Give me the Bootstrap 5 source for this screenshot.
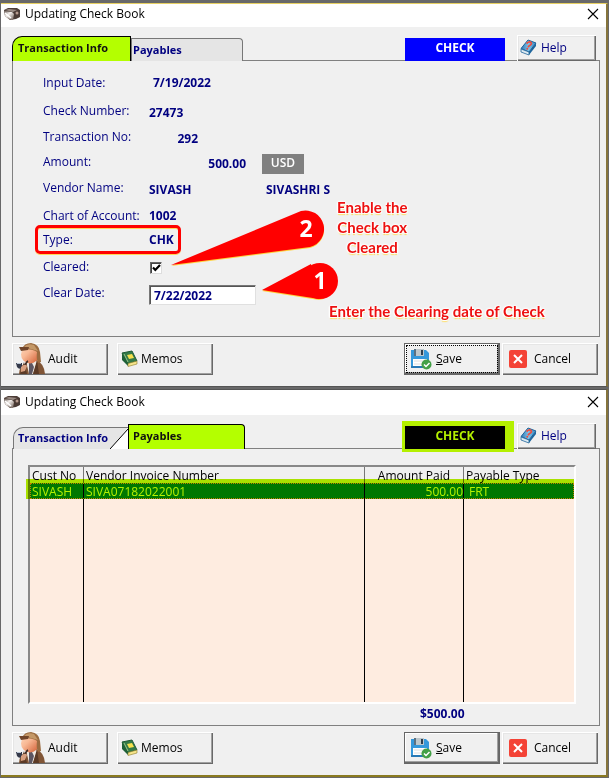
<!DOCTYPE html>
<html lang="en">
<head>
<meta charset="utf-8">
<meta name="viewport" content="width=device-width, initial-scale=1">
<title>Updating Check Book</title>
<link href="https://cdn.jsdelivr.net/npm/bootstrap@5.3.0/dist/css/bootstrap.min.css" rel="stylesheet">
<style>
body{background:#686869;font:12px/16px "Open Sans","Noto Sans",sans-serif;color:#000;padding:3px 1px 0}
h1{font-size:12px;line-height:16px;margin:0;font-weight:400}
svg{display:block;flex:none}
.win{background:#f0f0f0;border-right:2px solid #85743c;border-bottom:1px solid #555}
.win-first{border-top:1px solid #e6cf62;margin-bottom:2px}
.win-last{border-top:1px solid #555;border-bottom:2px solid #8a7a20}
.titlebar{background:#fff;height:23px;padding:0 7px 3px 3px;gap:5px}
.win-last .titlebar{height:25px;padding-bottom:1px}
.close-x{border:0;background:none;padding:0}
.work{padding:8px 6px 11px 11px}
.tabstrip{height:26px;margin-bottom:-1px;position:relative}
.tab-btn{font-size:11px;font-weight:700;color:#000080;text-align:left;border:1px solid #777;border-bottom:0;background:#e5e5e5;padding:0 4px 1px;white-space:nowrap}
.tab-btn.on{background:#b4ff00;color:#111;border-color:#000;padding-bottom:3px}
.tab-a{width:119px;height:25px;border-top-left-radius:10px;border-right-width:1px;padding-left:5px}
.tab-b{width:112px;height:23px;border-top-right-radius:4px;padding:0 1px}
.win-last .tab-a{width:97px;height:22px;margin-left:1px;border-right:0;padding-left:4px}
.win-last .tab-b{width:117px;height:25px;padding:0 4px 3px}
.status{width:100px;height:23px;background:#00f;color:#fff;font-weight:700;line-height:19px;text-align:center;margin-right:12px;position:relative}
.marked{background:#000;color:#b4f000;outline:3px solid #b4f000;box-shadow:6px 0 0 3px #b4f000,0 -2px 0 3px #b4f000,6px -2px 0 3px #b4f000;z-index:1}
.raised{background:#f0f0f0;border:0;box-shadow:inset 1px 1px #fff,inset -1px -1px #696969,inset -2px -2px #a0a0a0,inset 2px 2px #e6e6e6;width:96px;height:32px;padding:0 0 1px;display:flex;align-items:center;color:#000;text-align:left}
.help-btn{width:79px;height:26px;color:#000080;padding-left:3px;gap:4px;margin-right:4px}
.primary{box-shadow:inset 0 0 0 1px #666,inset -2px -2px #696969,inset -3px -3px #a0a0a0,inset 2px 2px #fff}
.dotted{outline:1px dotted #000;outline-offset:-3px}
.sheet{border:1px solid #808080;height:278px;color:#000080}
.sheet.fields{height:277px}
.fields{display:grid;grid-template-columns:106px 97px 1fr;grid-template-rows:28px 26px 25px 26px 28px 24px 27px 26px 20px;padding:14px 0 0 30px}
.third{margin-left:16px}
.drop{padding-top:2px}
.cur{background:#808080;color:#fff;font-weight:600;width:42px;height:20px;line-height:18px;text-align:center}
.date-in{width:107px;height:20px;border:1px solid;border-color:#777 #e0e0e0 #e0e0e0 #777;box-shadow:inset 1px 1px #555;font-weight:700;color:#000080;padding:0 4px;line-height:16px;background:#fff}
.tick{appearance:none;width:12px;height:12px;margin:3px 0 0 1px;background:#fff;border:1px solid;border-color:#666 #ddd #ddd #666;box-shadow:inset 1px 1px #444;display:block}
.tick:checked{background:#fff url("data:image/svg+xml,%3Csvg xmlns='http://www.w3.org/2000/svg' viewBox='0 0 10 10'%3E%3Cpath d='M2 4.5l2.3 2.4L9 2' fill='none' stroke='%23000' stroke-width='2.2'/%3E%3C/svg%3E")}
.stage{position:relative}
.over{position:absolute;pointer-events:none}
.type-box{left:34px;top:221px;width:146px;height:29px;border:3px solid #f00;border-radius:5px;box-shadow:0 1px 0 #ffd75a,inset 0 1px 0 #ffd75a}
.arrows{left:0;top:0}
.note{color:#ed1010;font:700 15px/20px Lato,"Open Sans",sans-serif;text-align:center;white-space:nowrap;text-shadow:1px 0 2px #fff,-1px 0 2px #fff,0 -1px 2px #fff,1px 1px 1px #fff,-1px 1px 1px #fff,0 2px 1px #ffd840}
.note-two{left:336px;top:193px}
.note-one{left:328px;top:297px}
.grid-wrap{position:relative;margin:16px 23px 0 15px;border:2px solid;border-color:#888 #fff #fff #888;background:#feece0}
.pay{width:100%;table-layout:fixed;border-collapse:separate;border-spacing:0;color:#000;line-height:15px}
.pay th{font-weight:400;background:#f0f0f0;height:16px;padding:0 2px;white-space:nowrap}
.pay td{padding:0 2px;height:16px;white-space:nowrap}
.pay th,.pay td{border-right:1px solid #000}
.pay th{border-right-color:#777}
.pay th:last-child,.pay td:last-child{border-right:0}
.pay .sel td{background:#008000;color:#fff}
.pay .sel td:last-child{padding-left:5px}
.pay .rest td{height:203px}
.marker{left:-4px;right:0;top:12px;height:20px;background:#b4f000;mix-blend-mode:multiply}
.sel-frame{left:0;right:0;top:16px;height:16px;border:1px dotted #c08000}
.total{margin:2px 0 0 407px}
.foot{padding:6px 2px 0 0}
.foot .memo{margin-left:9px;padding-left:4px;gap:3px}
.foot .primary{padding-left:6px;gap:4px}
.foot .cancel{margin-left:2px;padding-left:7px;gap:7px}
.foot .audit{padding-left:3px;gap:3px}
</style>
<script src="https://cdn.jsdelivr.net/npm/bootstrap@5.3.0/dist/js/bootstrap.bundle.min.js"></script>
</head>
<body>
<svg width="0" height="0" class="position-absolute" aria-hidden="true">
<defs>
<linearGradient id="face" x2="1" y2="1"><stop stop-color="#ffd9bd"/><stop offset=".4" stop-color="#f8b894"/><stop offset="1" stop-color="#d05a30"/></linearGradient>
<linearGradient id="blue" x2="1"><stop stop-color="#2f77b5"/><stop offset=".5" stop-color="#7dc3e8"/><stop offset="1" stop-color="#3a86c0"/></linearGradient>
<linearGradient id="metal" x2="1" y2="1"><stop stop-color="#6d605a"/><stop offset=".4" stop-color="#f3efec"/><stop offset="1" stop-color="#6d5b52"/></linearGradient>
</defs>
<symbol id="i-app" viewBox="0 0 16 14"><path d="M0 3l4-2 9 0 3 2v7l-4 2-6 1-5-4z" fill="#4c3d37"/><path d="M0 4l8 1 2 2-1 6-4-1-4-3z" fill="url(#metal)"/><path d="M1 3l4-1 8 1-4 2z" fill="#9b8d85"/><path d="M10 5l5-2v7l-5 2z" fill="#4a3a34"/><circle cx="13" cy="6" r="1.500" fill="#b59a8d"/><path d="M1 6l6 5" stroke="#fff" stroke-width="1.500"/></symbol>
<symbol id="i-x" viewBox="0 0 12 12"><path d="M1 1l10 10M11 1L1 11" stroke="#000" stroke-width="1.1" fill="none"/></symbol>
<symbol id="i-help" viewBox="0 0 17 17"><path d="M1 9.500L8 1l8 3-7 9z" fill="url(#blue)" stroke="#20649a"/><path d="M1 10l8 3v3l-8-3z" fill="#dceaf2" stroke="#20649a" stroke-width=".8"/><path d="M9 13l7-9v3l-7 9z" fill="#1d659c"/><path d="M6.500 4.500q3-2.500 4.500-1t-2 3.500l-1 1.200" stroke="#f04c3c" stroke-width="1.700" fill="none"/><circle cx="7.300" cy="9.800" r="1" fill="#f04c3c"/></symbol>
<symbol id="i-audit" viewBox="0 0 30 31"><path d="M4 31q0-8 7-11l10-3q8 3 9 14z" fill="#805536"/><path d="M11 18l3 13h4l4-12-3-4z" fill="#eee8e0"/><path d="M14 20h3l2 4-2 7h-3z" fill="#5c5662"/><path d="M9 19l-4 12h7zM22 17l-4 14h6z" fill="#5b3a26"/><circle cx="15" cy="11.500" r="9" fill="url(#face)"/><path d="M7 6Q9 0 16 0q8 1 9 9l1 10-3 1q-2-4-1-11-3-3-15-3z" fill="#9a6b40"/><path d="M9 4q3-4 10-2l4 6-7-2z" fill="#c49867"/><path d="M4 4l10 0-1 3-7 1z" fill="#70452a"/><path d="M13 18q-2 1-3 5l-3 1" stroke="#3a2b25" stroke-width="1.500" fill="none"/><path d="M1 20h6v5q-3 2-5-1z" fill="#34394a"/><path d="M2 20.500h4" stroke="#b9c5d4"/><path d="M6 24q4-4 6-1l-2 5-4 1z" fill="#d8a080"/></symbol>
<symbol id="i-memo" viewBox="0 0 17 17"><path d="M1 3l10-2 5 10-9 3z" fill="#337a48" stroke="#1f5a35"/><path d="M1 3v7l6 6v-3z" fill="#1e6038"/><path d="M7 13.500l9-2.500v3l-9 2.500z" fill="#f6e58c" stroke="#8b7a28" stroke-width=".6"/><path d="M6 5l5-1 2 4-5 1z" fill="#f7e04d"/><path d="M3 4l4 8" stroke="#9ac68a"/></symbol>
<symbol id="i-save" viewBox="0 0 22 22"><path d="M1 2h15l3 3v14H1z" fill="#3498db"/><path d="M4 1h10v7H4z" fill="#bdc7cc"/><path d="M11 2h2v5h-2z" fill="#2d3e4d"/><path d="M4 1h2v7H4z" fill="#5a7182"/><path d="M3 11h14v8H3z" fill="#fff"/><path d="M4 13h12M4 16h9" stroke="#dedede"/><path d="M1 18h18v2H1z" fill="#2879b5"/><circle cx="16.500" cy="16.500" r="5" fill="#43a047"/><path d="M14 16.500l2 2 3.500-3.500" fill="none" stroke="#fff" stroke-width="1.500"/></symbol>
<symbol id="i-cancel" viewBox="0 0 18 18"><rect width="18" height="18" rx="2" fill="#f44336"/><path d="M5 5l8 8M13 5l-8 8" stroke="#fff" stroke-width="2"/></symbol>
</svg>

<main>
<section class="win win-first stage">
  <header class="titlebar d-flex align-items-center">
    <svg width="16" height="14"><use href="#i-app"/></svg><h1>Updating Check Book</h1>
    <button class="close-x ms-auto" aria-label="Close"><svg width="12" height="12"><use href="#i-x"/></svg></button>
  </header>
  <div class="work">
    <div class="tabstrip d-flex align-items-end">
      <button class="tab-btn tab-a on">Transaction Info</button><button class="tab-btn tab-b">Payables</button>
      <div class="status ms-auto">CHECK</div>
      <button class="raised help-btn"><svg width="17" height="17"><use href="#i-help"/></svg>Help</button>
    </div>
    <div class="sheet fields">
      <span>Input Date:</span><b class="ps-1">7/19/2022</b><i></i>
      <span>Check Number:</span><b class="drop">27473</b><i></i>
      <span>Transaction No:</span><b class="drop ms-auto pe-5">292</b><i></i>
      <span>Amount:</span><b class="drop text-end">500.00</b><div class="third cur">USD</div>
      <span>Vendor Name:</span><b class="drop">SIVASH</b><b class="drop third ps-1">SIVASHRI S</b>
      <span>Chart of Account:</span><b>1002</b><i></i>
      <span>Type:</span><b>CHK</b><i></i>
      <label for="cleared">Cleared:</label><input class="tick" type="checkbox" id="cleared" checked><i></i>
      <label for="cdate">Clear Date:</label><input class="date-in" type="text" id="cdate" value="7/22/2022"><i></i>
    </div>
    <div class="foot d-flex">
      <button class="raised audit"><svg width="30" height="31"><use href="#i-audit"/></svg>Audit</button>
      <button class="raised memo"><svg width="17" height="17"><use href="#i-memo"/></svg>Memos</button>
      <button class="raised primary dotted ms-auto"><svg width="22" height="22"><use href="#i-save"/></svg><span><u>S</u>ave</span></button>
      <button class="raised cancel"><svg width="18" height="18"><use href="#i-cancel"/></svg>Cancel</button>
    </div>
  </div>
  <div class="over type-box"></div>
  <svg class="over arrows" width="345" height="310" aria-hidden="true">
    <g transform="translate(0 1)" fill="#ffd23c"><path d="M170 261L300 207A18 18 0 1 1 309 243zM261 286L310 260A18 18 0 1 1 318 295z"/></g>
    <path d="M170 261L300 207A18 18 0 1 1 309 243zM261 286L310 260L318 295z" fill="#f00"/>
    <circle cx="319" cy="277" r="18" fill="#f00"/>
    <g fill="#fff" font-family="Open Sans, sans-serif" font-weight="700" font-size="23" text-anchor="middle"><text x="305" y="233">2</text><text x="319" y="285">1</text></g>
  </svg>
  <div class="over note note-two">Enable the<br>Check box<br>Cleared</div>
  <div class="over note note-one">Enter the Clearing date of Check</div>
</section>

<section class="win win-last">
  <header class="titlebar d-flex align-items-center">
    <svg width="16" height="14"><use href="#i-app"/></svg><h1>Updating Check Book</h1>
    <button class="close-x ms-auto" aria-label="Close"><svg width="12" height="12"><use href="#i-x"/></svg></button>
  </header>
  <div class="work">
    <div class="tabstrip d-flex align-items-end">
      <button class="tab-btn tab-a">Transaction Info</button>
      <svg width="18" height="22"><path d="M0 0h18L0 22z" fill="#e5e5e5"/><path d="M18 2v20H0z" fill="#fff"/><path d="M0 .5h18" stroke="#777"/><path d="M0 22L18 2" stroke="#000"/></svg>
      <button class="tab-btn tab-b on">Payables</button>
      <div class="status marked ms-auto">CHECK</div>
      <button class="raised help-btn"><svg width="17" height="17"><use href="#i-help"/></svg>Help</button>
    </div>
    <div class="sheet">
      <div class="grid-wrap">
        <table class="pay">
          <colgroup><col style="width:54px"><col><col style="width:99px"><col style="width:110px"></colgroup>
          <thead><tr><th>Cust No</th><th>Vendor Invoice Number</th><th class="text-center">Amount Paid</th><th>Payable Type</th></tr></thead>
          <tbody>
            <tr class="sel"><td>SIVASH</td><td>SIVA07182022001</td><td class="text-end pe-0">500.00</td><td>FRT</td></tr>
            <tr class="rest"><td></td><td></td><td></td><td></td></tr>
          </tbody>
        </table>
        <div class="over marker"></div><div class="over sel-frame"></div>
      </div>
      <div class="total fw-bold">$500.00</div>
    </div>
    <div class="foot d-flex">
      <button class="raised audit"><svg width="30" height="31"><use href="#i-audit"/></svg>Audit</button>
      <button class="raised memo"><svg width="17" height="17"><use href="#i-memo"/></svg>Memos</button>
      <button class="raised primary ms-auto"><svg width="22" height="22"><use href="#i-save"/></svg><span><u>S</u>ave</span></button>
      <button class="raised cancel"><svg width="18" height="18"><use href="#i-cancel"/></svg>Cancel</button>
    </div>
  </div>
</section>
</main>
</body>
</html>
